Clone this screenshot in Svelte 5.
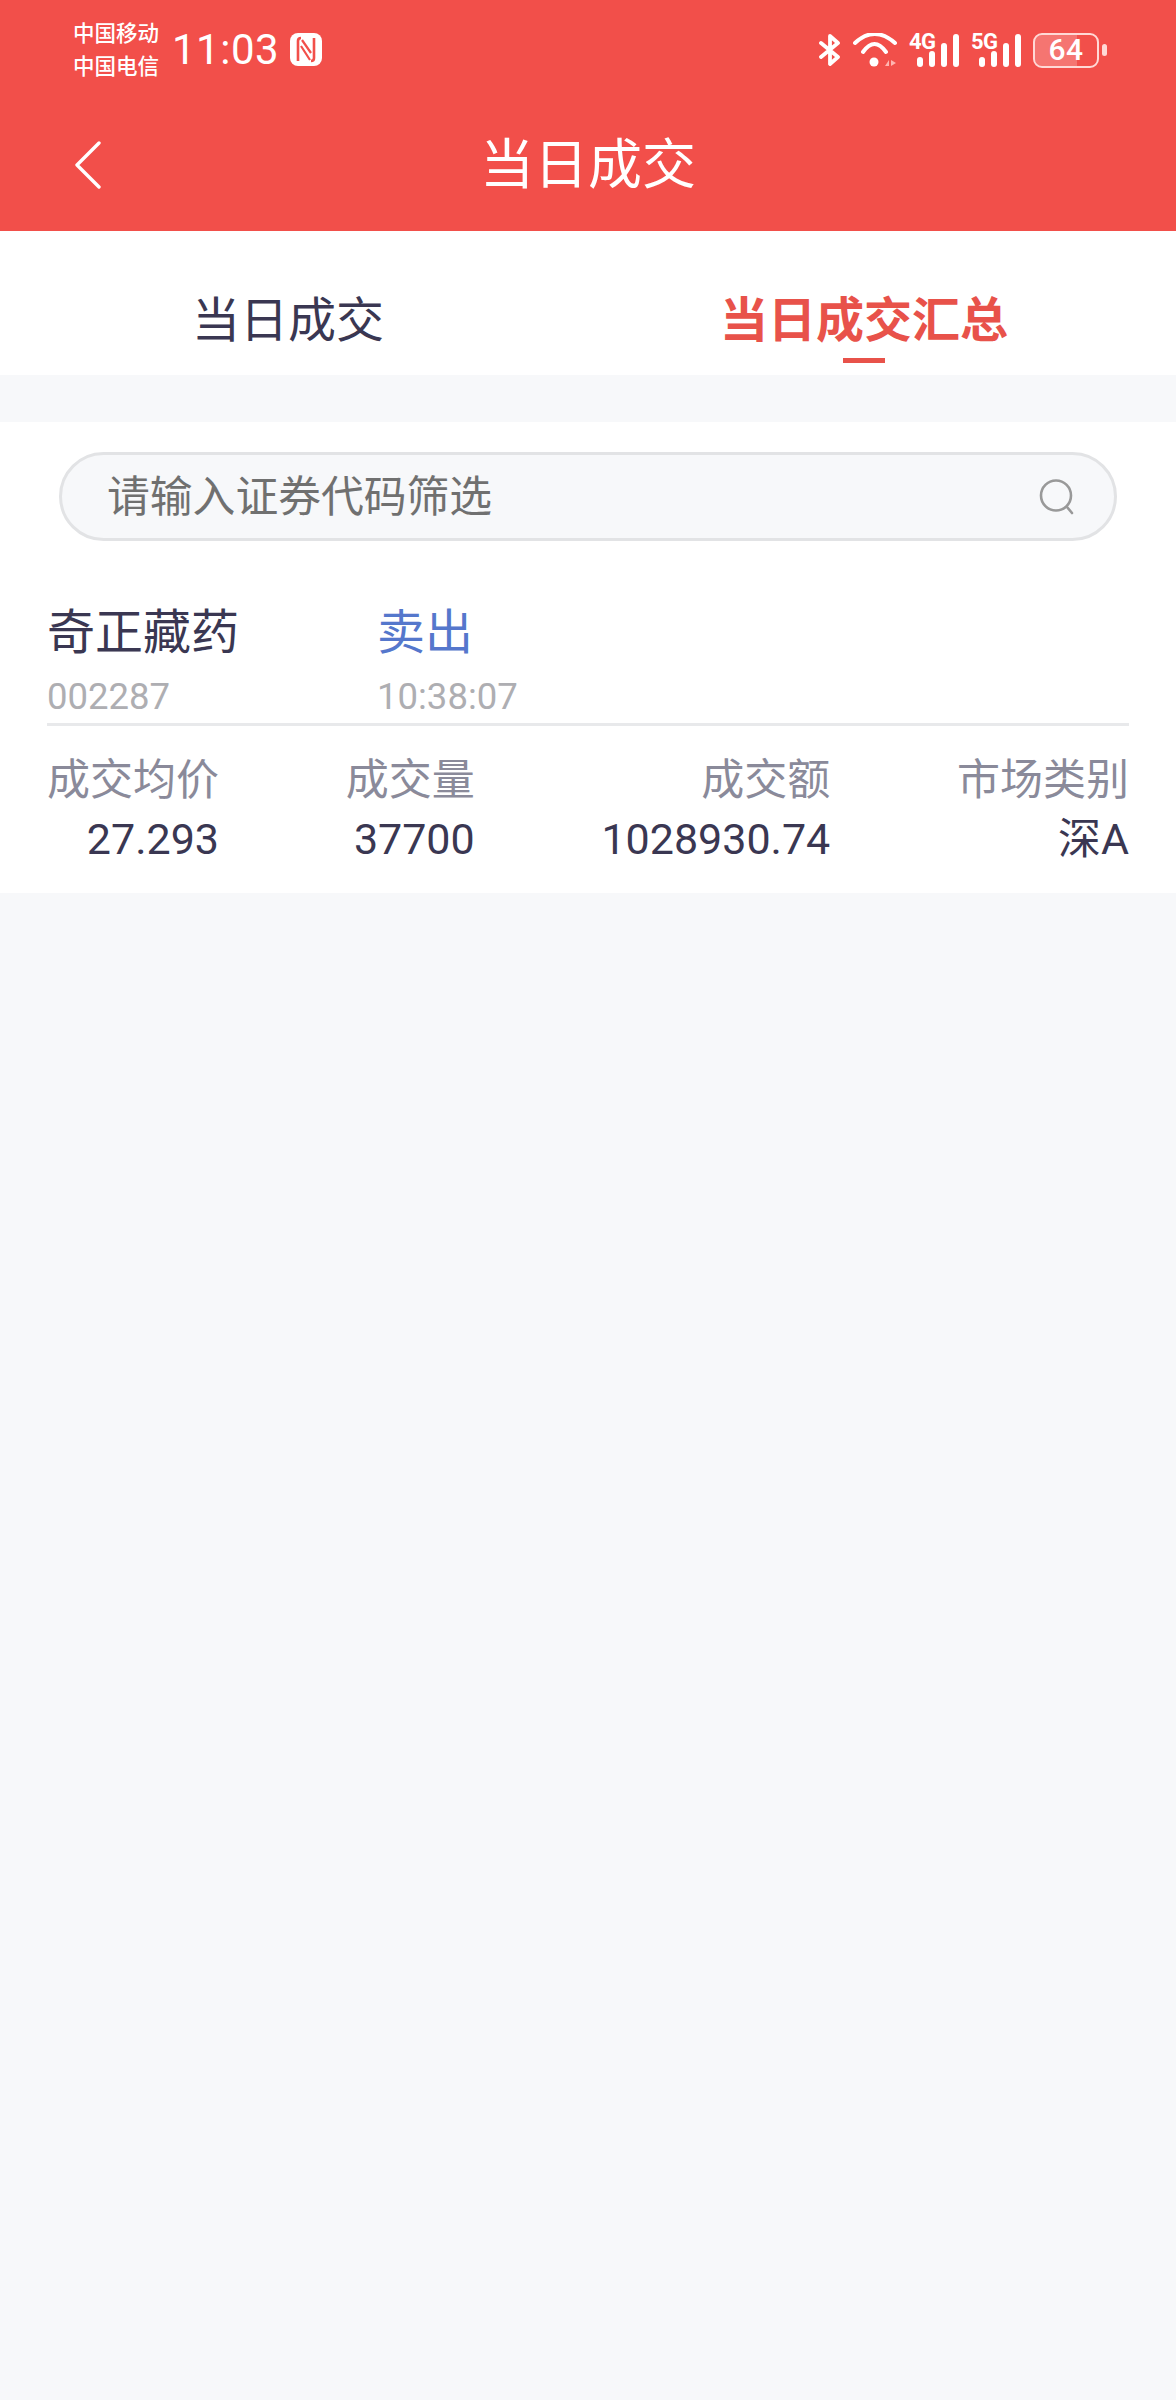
<script>
  const tabs = [
    { label: '当日成交', active: false },
    { label: '当日成交汇总', active: true }
  ];
  const cols = [
    { label: '成交均价', value: '27.293' },
    { label: '成交量', value: '37700' },
    { label: '成交额', value: '1028930.74' },
    { label: '市场类别', value: '深A' }
  ];
</script>

<div class="page">
  <header class="head">
    <div class="status">
      <div class="carriers"><span>中国移动</span><span>中国电信</span></div>
      <span class="clock">11:03</span>
      <svg class="nfc" width="32" height="33" viewBox="0 0 32 33">
        <rect width="32" height="33" rx="8" fill="#fff" />
        <path d="M8 28V8c0-2 1-3 3-3M24 5v20c0 2-1 3-3 3" fill="none" stroke="#f24f4a" stroke-width="2.600" />
        <path d="M12 7l9 13M11 13l9 14" fill="none" stroke="#f24f4a" stroke-width="2.200" />
      </svg>
      <div class="sys">
        <svg width="22" height="32" viewBox="0 0 22 32" class="bt">
          <path d="M2 9l17 14-8 7V2l8 7L2 23" fill="none" stroke="#fff" stroke-width="3.800" stroke-linecap="round" stroke-linejoin="round" />
        </svg>
        <svg width="44" height="34" viewBox="0 0 44 34" class="wifi">
          <path d="M2 10Q21.500-8 42 10M10 19Q21.500 3 33 19" fill="none" stroke="#fff" stroke-width="4" stroke-linecap="round" />
          <circle cx="21" cy="29" r="4.500" fill="#fff" />
          <path d="M32 33l4-6v6zM38 27l5 3-5 3z" fill="#ffb5b0" />
        </svg>
        <div class="net">
          <span class="gen">4G</span>
          <div class="bars">
            <i class="b1"></i><i class="b2"></i><i class="b3"></i><i class="b4"></i>
          </div>
        </div>
        <div class="net">
          <span class="gen">5G</span>
          <div class="bars">
            <i class="b1"></i><i class="b2"></i><i class="b3"></i><i class="b4"></i>
          </div>
        </div>
        <div class="battery">
          <div class="cell"><div class="level"></div><span>64</span></div>
          <div class="nub"></div>
        </div>
      </div>
    </div>
    <div class="nav">
      <svg class="back" width="26" height="48" viewBox="0 0 26 48">
        <path d="M24 2L2 24l22 22" fill="none" stroke="#fff" stroke-width="3.400" stroke-linecap="round" stroke-linejoin="round" />
      </svg>
      <h1>当日成交</h1>
    </div>
  </header>

  <nav class="tabs">
    {#each tabs as tab}
      <div class="tab" class:active={tab.active}>
        <span>{tab.label}</span>
        {#if tab.active}<i class="line"></i>{/if}
      </div>
    {/each}
  </nav>

  <section class="card">
    <div class="search">
      <span class="ph">请输入证券代码筛选</span>
      <svg width="36" height="36" viewBox="0 0 36 36">
        <circle cx="17" cy="16.500" r="15" fill="none" stroke="#999" stroke-width="2.600" />
        <path d="M28 28l5 6" fill="none" stroke="#999" stroke-width="2.600" stroke-linecap="round" />
      </svg>
    </div>
    <div class="item">
      <div class="top">
        <div>
          <div class="name">奇正藏药</div>
          <div class="sub">002287</div>
        </div>
        <div>
          <div class="name sell">卖出</div>
          <div class="sub">10:38:07</div>
        </div>
      </div>
      <div class="stats">
        {#each cols as c}
          <div class="stat">
            <div class="lbl">{c.label}</div>
            <div class="val">{c.value}</div>
          </div>
        {/each}
      </div>
    </div>
  </section>
</div>

<style>
  :global(body) {
    margin: 0;
    background: #f7f8fa;
  }
  .page {
    min-height: 2400px;
    background: #f7f8fa;
    font-family: Roboto, "Noto Sans CJK SC", sans-serif;
    color: #3a3752;
  }
  .head {
    height: 231px;
    background: #f24f4a;
    color: #fff;
    box-sizing: border-box;
  }
  .status {
    display: flex;
    align-items: center;
    height: 100px;
    padding-left: 73px;
  }
  .carriers {
    display: flex;
    flex-direction: column;
    font-size: 21.500px;
    font-weight: 500;
    line-height: 33px;
    width: 99px;
  }
  .clock {
    font-size: 42px;
    width: 118px;
    line-height: 50px;
    letter-spacing: 0.500px;
  }
  .nfc {
    margin-top: -2px;
  }
  .sys {
    display: flex;
    align-items: center;
    margin-left: 497px;
  }
  .bt { margin-right: 12px; }
  .wifi { margin-right: 12px; }
  .net {
    position: relative;
    width: 52px;
    height: 34px;
    margin-right: 10px;
  }
  .gen {
    position: absolute;
    left: 0;
    top: -2px;
    font-size: 22px;
    font-weight: 700;
    line-height: 22px;
    letter-spacing: -0.500px;
  }
  .bars {
    position: absolute;
    right: 2px;
    bottom: 0;
    display: flex;
    align-items: flex-end;
    gap: 6px;
  }
  .bars i {
    display: block;
    width: 6px;
    background: #fff;
    border-radius: 3px;
  }
  .b1 { height: 10px; }
  .b2 { height: 16px; }
  .b3 { height: 24px; }
  .b4 { height: 33px; }
  .battery {
    display: flex;
    align-items: center;
    gap: 3px;
  }
  .cell {
    position: relative;
    width: 66px;
    height: 35px;
    box-sizing: border-box;
    border: 2.500px solid #ffd9d6;
    border-radius: 9px;
    overflow: hidden;
    display: flex;
    align-items: center;
    justify-content: center;
  }
  .level {
    position: absolute;
    left: 0;
    top: 0;
    bottom: 0;
    width: 68%;
    background: rgba(255, 255, 255, 0.22);
  }
  .cell span {
    position: relative;
    font-size: 30px;
    font-weight: 500;
    line-height: 30px;
    letter-spacing: 0.500px;
  }
  .nub {
    width: 5px;
    height: 12px;
    background: #ffd9d6;
    border-radius: 3px;
  }
  .nav {
    position: relative;
    height: 131px;
    display: flex;
    align-items: center;
    justify-content: center;
    box-sizing: border-box;
  }
  .back {
    position: absolute;
    left: 75px;
    top: 41px;
  }
  h1 {
    margin: 0;
    font-size: 54px;
    font-weight: 400;
    line-height: 60px;
  }
  .tabs {
    display: grid;
    grid-template-columns: 1fr 1fr;
    height: 144px;
    background: #fff;
    margin-bottom: 47px;
    padding-right: 24px;
  }
  .tab {
    display: flex;
    flex-direction: column;
    align-items: center;
    padding-top: 62px;
    font-size: 48px;
    line-height: 56px;
    box-sizing: border-box;
  }
  .tab.active {
    color: #e8524a;
    font-weight: 700;
  }
  .line {
    display: block;
    width: 42px;
    height: 5px;
    background: #e8524a;
    margin-top: 9px;
  }
  .card {
    background: #fff;
    height: 471px;
    padding-top: 30px;
    box-sizing: border-box;
  }
  .search {
    margin: 0 59px;
    height: 89px;
    box-sizing: border-box;
    border: 3px solid #e2e3e5;
    border-radius: 45px;
    background: #f7f8fa;
    display: flex;
    align-items: center;
    justify-content: space-between;
    padding: 0 39px 0 45px;
  }
  .ph {
    font-size: 42.800px;
    line-height: 50px;
    margin-top: 1px;
    color: #707070;
  }
  .item {
    padding: 62px 47px 0;
  }
  .top {
    display: grid;
    grid-template-columns: 330px 1fr;
    height: 120px;
    border-bottom: 3px solid #e8e9eb;
  }
  .name {
    font-size: 48px;
    line-height: 60px;
    height: 73px;
  }
  .sell {
    color: #5577cc;
  }
  .sub {
    font-size: 36.500px;
    line-height: 42px;
    color: #aeaeb2;
  }
  .stats {
    display: flex;
    justify-content: space-between;
    padding-top: 26px;
  }
  .stat {
    text-align: right;
  }
  .lbl {
    font-size: 43px;
    line-height: 56px;
    color: #8a8a9a;
  }
  .val {
    font-size: 43px;
    line-height: 50px;
    margin-top: 6px;
  }
</style>
